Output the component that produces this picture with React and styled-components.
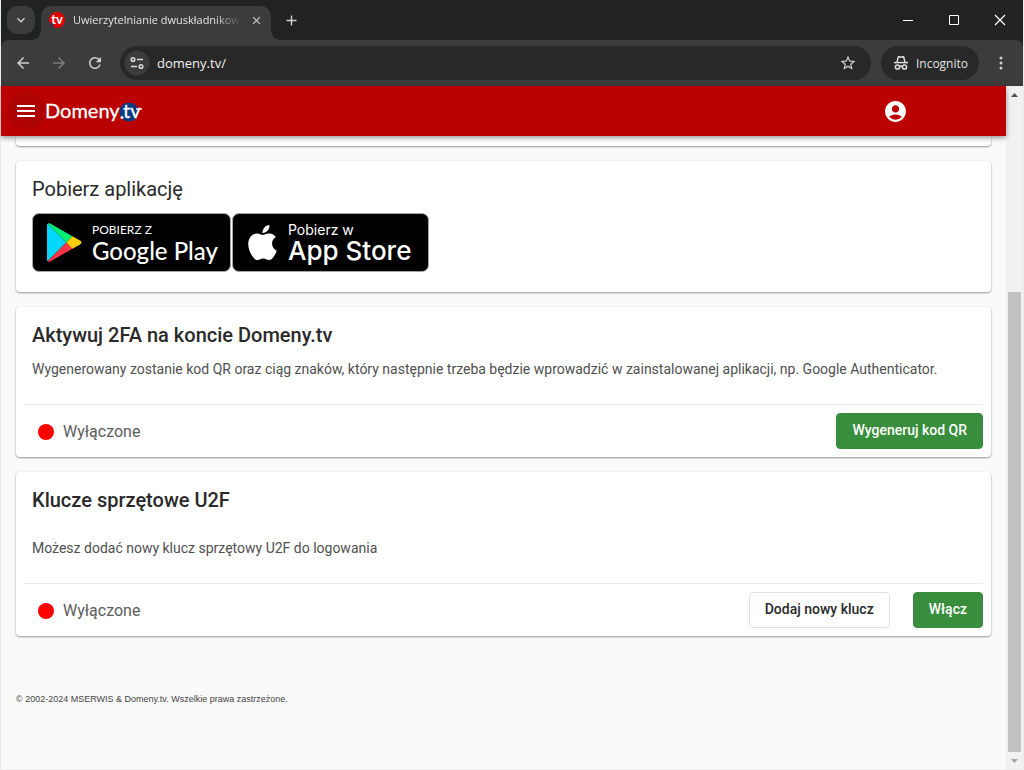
import React from "react";
import styled, { createGlobalStyle, css } from "styled-components";
import {
  MdAccountCircle,
  MdArrowBack,
  MdArrowForward,
  MdClose,
  MdExpandMore,
  MdRefresh,
  MdStarBorder,
  MdAdd,
} from "react-icons/md";
import { SiApple } from "react-icons/si";

const GlobalStyle = createGlobalStyle`
  *, *::before, *::after { box-sizing: border-box; }
  body {
    margin: 0;
    background: #ececec;
    font-family: Roboto, "Liberation Sans", sans-serif;
    color: #2a2a2a;
  }
  button { font: inherit; color: inherit; cursor: pointer; }
  h2, p { margin: 0; }
  svg { display: block; flex: none; }
`;

const Window = styled.div`
  display: flex;
  flex-direction: column;
  min-height: 100vh;
  padding: 0 1px 1px;
`;

const uiFont = css`
  font-family: "Open Sans", "Noto Sans", sans-serif;
`;

/* ---------- browser chrome ---------- */

const TabStrip = styled.div`
  ${uiFont}
  display: flex;
  align-items: flex-start;
  height: 40px;
  padding: 6px 0 0 6px;
  background: #202322;
  color: #e3e3e3;
`;

const PlainButton = styled.button`
  display: flex;
  align-items: center;
  justify-content: center;
  width: ${(p) => p.$w}px;
  height: ${(p) => p.$h}px;
  padding: 0;
  border: 0;
  border-radius: ${(p) => p.$radius || 0}px;
  background: ${(p) => p.$bg || "transparent"};
  color: ${(p) => p.$color || "#d0d0d0"};
`;

const Tab = styled.div`
  position: relative;
  display: flex;
  align-items: center;
  width: 230px;
  height: 34px;
  margin: 0 10px 0 6px;
  padding: 0 7px 6px 8px;
  border-radius: 10px 10px 0 0;
  background: #3c3c3c;

  &::before,
  &::after {
    content: "";
    position: absolute;
    bottom: 0;
    width: 10px;
    height: 10px;
  }
  &::before {
    left: -10px;
    background: radial-gradient(circle at 0 0, transparent 10px, #3c3c3c 10px);
  }
  &::after {
    right: -10px;
    background: radial-gradient(circle at 100% 0, transparent 10px, #3c3c3c 10px);
  }
`;

const TabTitle = styled.span`
  flex: 1;
  min-width: 0;
  margin: 0 7px 0 8px;
  overflow: hidden;
  white-space: nowrap;
  font-size: 11px;
  line-height: 16px;
  mask-image: linear-gradient(to right, #000 85%, transparent);
`;

const WindowButtons = styled.div`
  display: flex;
  margin: -6px 0 0 auto;
`;

const ToolbarWrap = styled.div`
  background: #202322;
`;

const Toolbar = styled.div`
  ${uiFont}
  display: flex;
  align-items: center;
  height: 46px;
  padding: 0 0 0 4px;
  border-radius: 8px 8px 0 0;
  background: #3c3c3c;
  color: #e3e3e3;
`;

const AddressBar = styled.div`
  display: flex;
  flex: 1;
  align-items: center;
  min-width: 0;
  height: 34px;
  margin: 0 10px 0 7px;
  padding: 0 10px 0 4px;
  border-radius: 17px;
  background: #282828;
`;

const Address = styled.input`
  flex: 1;
  min-width: 0;
  margin: 0 7px;
  padding: 0;
  border: 0;
  outline: 0;
  background: none;
  color: #f1f1f1;
  font: inherit;
  font-size: 13px;
  line-height: 20px;
`;

const Chip = styled.button`
  display: flex;
  align-items: center;
  gap: 7px;
  height: 34px;
  padding: 0 11px 0 12px;
  border: 0;
  border-radius: 17px;
  background: #282828;
  color: #e3e3e3;
  font-size: 12px;
`;

/* ---------- page ---------- */

const Viewport = styled.div`
  display: flex;
  flex: 1;
`;

const Page = styled.div`
  flex: 1;
  min-width: 0;
  background: #fafafa;
`;

const Header = styled.header`
  position: relative;
  z-index: 1;
  display: flex;
  align-items: center;
  height: 50px;
  padding: 0 98px 0 6px;
  background: #bb0000;
  box-shadow: 0 2px 5px rgba(0, 0, 0, 0.4);
  color: #fff;
`;

const LogoLink = styled.a`
  margin-right: auto;
`;

const Main = styled.main`
  display: flex;
  flex-direction: column;
  gap: 15px;
  padding: 0 15px;
`;

const cardShape = css`
  border-radius: 4px;
  background: #fff;
  box-shadow: 0 1px 2px rgba(0, 0, 0, 0.4), 0 0 2px rgba(0, 0, 0, 0.06);
`;

const Card = styled.section`
  ${cardShape}
  padding: 16px 8px 8px;
`;

const CardEnd = styled.div`
  ${cardShape}
  height: 10px;
  border-radius: 0 0 4px 4px;
`;

const CardTitle = styled.h2`
  padding: 0 8px;
  font-size: 20px;
  font-weight: ${(p) => p.$weight || 500};
  line-height: 24px;
`;

const CardText = styled.p`
  margin-top: ${(p) => p.$top}px;
  padding: 0 8px;
  color: #505050;
  font-size: 14px;
  line-height: 20px;
`;

const Actions = styled.div`
  display: flex;
  align-items: center;
  gap: 23px;
  margin-top: 25px;
  padding-top: 8px;
  border-top: 1px solid #ececec;
`;

const Status = styled.span`
  display: flex;
  align-items: center;
  gap: 9px;
  margin-right: auto;
  padding: 2px 0 0 14px;
  color: #5c5c5c;
  font-size: 16px;
  line-height: 20px;

  &::before {
    content: "";
    width: 16px;
    height: 16px;
    border-radius: 50%;
    background: #f00;
  }
`;

const ActionButton = styled.button`
  height: 36px;
  padding: 0 15px 2px;
  border: 1px solid ${(p) => (p.$primary ? "#388e3c" : "#e0e0e0")};
  border-radius: 4px;
  background: ${(p) => (p.$primary ? "#388e3c" : "#fff")};
  color: ${(p) => (p.$primary ? "#fff" : "#2a2a2a")};
  font-size: 14px;
  font-weight: 500;
`;

const Badges = styled.div`
  display: flex;
  gap: 1px;
  padding: 12px 8px;
`;

const Badge = styled.a`
  display: flex;
  align-items: center;
  gap: ${(p) => p.$gap}px;
  width: ${(p) => p.$w}px;
  height: 59px;
  padding-left: ${(p) => p.$left}px;
  border: 1px solid #a6a6a6;
  border-radius: 7px;
  background: #000;
  color: #fff;
  font-family: ${(p) => p.$font}, sans-serif;
  text-decoration: none;
  white-space: nowrap;
`;

const BadgeText = styled.span`
  display: flex;
  flex-direction: column;
`;

const BadgeSmall = styled.span`
  font-size: ${(p) => p.$size}px;
  line-height: 15px;
`;

const BadgeName = styled.span`
  font-size: ${(p) => p.$size}px;
  font-weight: 500;
  line-height: ${(p) => p.$line}px;
`;

const Footer = styled.footer`
  padding: 56px 15px 48px;
  color: #444;
  font-family: "Liberation Sans", Arial, sans-serif;
  font-size: 9px;
  line-height: 14px;
`;

const Scrollbar = styled.div`
  display: flex;
  flex-direction: column;
  align-items: center;
  width: 17px;
  background: #f1f1f1;
`;

const ScrollTrack = styled.div`
  display: flex;
  flex: 1;
  flex-direction: column;
  width: 13px;
`;

const ScrollGap = styled.div`
  flex: 189;
`;

const ScrollThumb = styled.div`
  flex: 460;
  background: #c1c1c1;
`;

const Favicon = () => (
  <svg width="16" height="16" viewBox="0 0 16 16" aria-hidden="true">
    <circle cx="8" cy="8" r="8" fill="#e30000" />
    <path d="M1 11.500A8 8 0 0 0 5 15.400L3.500 11z" fill="#0a3a82" />
    <text x="8" y="12" textAnchor="middle" fontFamily="Lato, sans-serif" fontWeight="700" fontSize="13" fill="#fff">
      tv
    </text>
  </svg>
);

const SiteInfoIcon = () => (
  <svg width="26" height="26" viewBox="0 0 26 26" fill="none" stroke="#dcdcdc" strokeWidth="1.500" aria-hidden="true">
    <circle cx="13" cy="13" r="12.500" fill="#3c3c3c" stroke="none" />
    <circle cx="9" cy="9.500" r="1.800" />
    <path d="M13 9.500h6M7 16.500h6" />
    <circle cx="17" cy="16.500" r="1.800" />
  </svg>
);

const IncognitoIcon = () => (
  <svg width="16" height="16" viewBox="0 0 16 16" fill="none" stroke="#dcdcdc" strokeWidth="1.500" aria-hidden="true">
    <path d="M1 7.600h14" />
    <path d="M4 7.300 5.200 2.200c.1-.4.5-.6.9-.5L8 2.200l1.900-.5c.4-.1.8.1.9.5L12 7.300" />
    <circle cx="4.500" cy="12" r="2.100" />
    <circle cx="11.500" cy="12" r="2.100" />
    <path d="M6.600 11.600c.9-.6 1.900-.6 2.800 0" />
  </svg>
);

const MenuIcon = () => (
  <svg width="38" height="38" viewBox="0 0 38 38" aria-hidden="true">
    <circle cx="19" cy="19" r="19" fill="#ad0303" />
    <path d="M10 14h18M10 19h18M10 24h18" stroke="#fff" strokeWidth="2" />
  </svg>
);

const Logo = () => (
  <svg width="100" height="28" viewBox="0 0 100 28" aria-label="Domeny.tv" role="img">
    <circle cx="84" cy="15" r="9.500" fill="#0a3a82" />
    <g fontFamily="Lato, sans-serif" fill="#fff" stroke="#fff" strokeWidth="0.300" fontSize="20">
      <text x="0" y="21">Domeny</text>
      <text x="78" y="21">tv</text>
    </g>
    <circle cx="77" cy="20.500" r="1.500" fill="#fff" />
    <path d="M91 12h6" stroke="#fff" strokeWidth="1.400" />
  </svg>
);

const PlayIcon = () => (
  <svg width="35" height="39" viewBox="0 0 35 39" aria-hidden="true">
    <path d="M.6.8C.2 1.200 0 1.800 0 2.600v33.800c0 .8.2 1.400.6 1.800L19.300 19.500z" fill="#00d7fe" />
    <path d="M25.400 13.200 3.200.6C2.200 0 1.200.1.600.800l18.700 18.700z" fill="#00ee76" />
    <path d="m.6 38.200c.6.7 1.600.8 2.600.2l22.200-12.600-6.100-6.300z" fill="#fb3448" />
    <path d="M25.400 13.200 33 17.500c2 1.200 2 2.800 0 4l-7.600 4.300-6.100-6.300z" fill="#ffcc08" />
  </svg>
);

const ScrollArrow = ({ down }) => (
  <svg width="17" height="17" viewBox="0 0 17 17" aria-hidden="true">
    <path d={down ? "M5 7h7l-3.500 4z" : "M5 11h7l-3.500-4z"} fill={down ? "#a3a3a3" : "#505050"} />
  </svg>
);

export default function App() {
  return (
    <Window>
      <GlobalStyle />
      <TabStrip>
        <PlainButton $w={28} $h={28} $radius={10} $bg="#3c3c3c" aria-label="Szukaj kart">
          <MdExpandMore size={16} />
        </PlainButton>
        <Tab>
          <Favicon />
          <TabTitle>Uwierzytelnianie dwuskładnikowe</TabTitle>
          <PlainButton $w={16} $h={16} aria-label="Zamknij kartę">
            <MdClose size={13} />
          </PlainButton>
        </Tab>
        <PlainButton $w={20} $h={28} aria-label="Nowa karta">
          <MdAdd size={17} />
        </PlainButton>
        <WindowButtons>
          <PlainButton $w={46} $h={40} $color="#fff" aria-label="Minimalizuj">
            <svg width="12" height="12" stroke="currentColor" fill="none">
              <path d="M1 6.500h10" />
            </svg>
          </PlainButton>
          <PlainButton $w={46} $h={40} $color="#fff" aria-label="Maksymalizuj">
            <svg width="12" height="12" stroke="currentColor" fill="none">
              <path d="M1.500 1.500h9v9h-9z" />
            </svg>
          </PlainButton>
          <PlainButton $w={46} $h={40} $color="#fff" aria-label="Zamknij">
            <svg width="12" height="12" stroke="currentColor" fill="none" strokeWidth="1.200">
              <path d="M1 1l10 10M11 1 1 11" />
            </svg>
          </PlainButton>
        </WindowButtons>
      </TabStrip>

      <ToolbarWrap>
        <Toolbar>
          <PlainButton $w={36} $h={34} aria-label="Wstecz">
            <MdArrowBack size={18} />
          </PlainButton>
          <PlainButton $w={36} $h={34} $color="#7c7c7c" aria-label="Dalej">
            <MdArrowForward size={18} />
          </PlainButton>
          <PlainButton $w={36} $h={34} aria-label="Odśwież">
            <MdRefresh size={18} />
          </PlainButton>
          <AddressBar>
            <SiteInfoIcon />
            <Address aria-label="Adres strony" defaultValue="domeny.tv/" />
            <PlainButton $w={26} $h={26} aria-label="Dodaj do zakładek">
              <MdStarBorder size={18} />
            </PlainButton>
          </AddressBar>
          <Chip>
            <IncognitoIcon />
            Incognito
          </Chip>
          <PlainButton $w={44} $h={34} aria-label="Menu przeglądarki">
            <svg width="4" height="16" fill="currentColor">
              <circle cx="2" cy="3" r="1.500" />
              <circle cx="2" cy="8" r="1.500" />
              <circle cx="2" cy="13" r="1.500" />
            </svg>
          </PlainButton>
        </Toolbar>
      </ToolbarWrap>

      <Viewport>
        <Page>
          <Header>
            <PlainButton $w={38} $h={38} $radius={19} aria-label="Menu">
              <MenuIcon />
            </PlainButton>
            <LogoLink href="#">
              <Logo />
            </LogoLink>
            <PlainButton $w={26} $h={26} $color="#fff" aria-label="Konto">
              <MdAccountCircle size={25} />
            </PlainButton>
          </Header>

          <Main>
            <CardEnd />
            <Card>
              <CardTitle $weight={400}>Pobierz aplikację</CardTitle>
              <Badges>
                <Badge href="#" $w={199} $gap={10} $left={14} $font="Lato">
                  <PlayIcon />
                  <BadgeText>
                    <BadgeSmall $size={12}>POBIERZ Z</BadgeSmall>
                    <BadgeName $size={24} $line={27}>Google Play</BadgeName>
                  </BadgeText>
                </Badge>
                <Badge href="#" $w={197} $gap={8} $left={12} $font="Inter">
                  <SiApple size={35} />
                  <BadgeText>
                    <BadgeSmall $size={14}>Pobierz w</BadgeSmall>
                    <BadgeName $size={26} $line={27}>App Store</BadgeName>
                  </BadgeText>
                </Badge>
              </Badges>
            </Card>

            <Card>
              <CardTitle>Aktywuj 2FA na koncie Domeny.tv</CardTitle>
              <CardText $top={12}>
                Wygenerowany zostanie kod QR oraz ciąg znaków, który następnie trzeba będzie wprowadzić w
                zainstalowanej aplikacji, np. Google Authenticator.
              </CardText>
              <Actions>
                <Status>Wyłączone</Status>
                <ActionButton $primary>Wygeneruj kod QR</ActionButton>
              </Actions>
            </Card>

            <Card>
              <CardTitle>Klucze sprzętowe U2F</CardTitle>
              <CardText $top={26}>Możesz dodać nowy klucz sprzętowy U2F do logowania</CardText>
              <Actions>
                <Status>Wyłączone</Status>
                <ActionButton>Dodaj nowy klucz</ActionButton>
                <ActionButton $primary>Włącz</ActionButton>
              </Actions>
            </Card>
          </Main>

          <Footer>© 2002-2024 MSERWIS &amp; Domeny.tv. Wszelkie prawa zastrzeżone.</Footer>
        </Page>

        <Scrollbar aria-hidden="true">
          <ScrollArrow />
          <ScrollTrack>
            <ScrollGap />
            <ScrollThumb />
          </ScrollTrack>
          <ScrollArrow down />
        </Scrollbar>
      </Viewport>
    </Window>
  );
}
